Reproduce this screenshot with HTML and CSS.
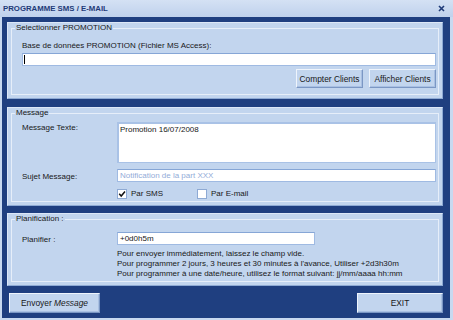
FILE: index.html
```html
<!doctype html>
<html lang="fr">
    <head>
        <meta charset="UTF-8" />
        <title>PROGRAMME SMS / E-MAIL</title>
        <link rel="stylesheet" href="styles.css">
    </head>
    <body>
        <div class="window">
            <div class="titlebar">
                <span class="title">PROGRAMME SMS / E-MAIL</span>
                <svg class="close" width="7" height="7" viewBox="0 0 7 7">
                    <path d="M1 1 L6 6 M6 1 L1 6" stroke="#1f3b78" stroke-width="1.6" />
                </svg>
            </div>

            <div class="frame">
                <section class="panel panel-promo">
                    <fieldset class="group">
                        <legend>Selectionner PROMOTION</legend>
                        <div class="group-body">
                            <div class="field-label">Base de données PROMOTION (Fichier MS Access):</div>
                            <div class="text-input db-input"><span class="caret"></span></div>
                            <div class="btn-row">
                                <button class="btn btn-clients">Compter Clients</button>
                                <button class="btn btn-clients">Afficher Clients</button>
                            </div>
                        </div>
                    </fieldset>
                </section>

                <section class="panel panel-message">
                    <fieldset class="group">
                        <legend>Message</legend>
                        <div class="group-body form-grid">
                            <div class="row-label">Message Texte:</div>
                            <div class="text-area">Promotion 16/07/2008</div>

                            <div class="row-label subject-label">Sujet Message:</div>
                            <div class="text-input subject-input placeholder">Notification de la part XXX</div>

                            <div></div>
                            <div class="checks">
                                <span class="check-item">
                                    <span class="check-box">
                                        <svg width="8" height="8" viewBox="0 0 8 8">
                                            <path d="M1.2 3.8 L3.2 6 L7 1.6" fill="none" stroke="#111" stroke-width="1.5" />
                                        </svg>
                                    </span>
                                    Par SMS
                                </span>
                                <span class="check-item">
                                    <span class="check-box"></span>
                                    Par E-mail
                                </span>
                            </div>
                        </div>
                    </fieldset>
                </section>

                <section class="panel panel-plan">
                    <fieldset class="group">
                        <legend>Planification :</legend>
                        <div class="group-body form-grid">
                            <div class="row-label plan-label">Planifier :</div>
                            <div class="text-input plan-input">+0d0h5m</div>

                            <div></div>
                            <div class="help">
                                <p>Pour envoyer immédiatement, laissez le champ vide.</p>
                                <p>Pour programmer 2 jours, 3 heures et 30 minutes à l'avance, Utiliser +2d3h30m</p>
                                <p>Pour programmer à une date/heure, utilisez le format suivant: jj/mm/aaaa hh:mm</p>
                            </div>
                        </div>
                    </fieldset>
                </section>

                <div class="actions">
                    <button class="btn btn-send">Envoyer <i>Message</i></button>
                    <button class="btn btn-exit">EXIT</button>
                </div>
            </div>
        </div>
    </body>
</html>
```

FILE: styles.css
```css
* {
    margin: 0;
    padding: 0;
    box-sizing: border-box;
}

body {
    font-family: "Liberation Sans", Arial, sans-serif;
    font-size: 8px;
    line-height: 10px;
    color: #181818;
    background: #c8d9f0;
}

.window {
    width: 453px;
    height: 320px;
    display: flex;
    flex-direction: column;
}

.titlebar {
    height: 17px;
    display: flex;
    align-items: center;
    justify-content: space-between;
    padding: 0 8px 0 3px;
    background: linear-gradient(#d4e1f4, #bfd1ec);
}

.title {
    font-weight: bold;
    font-size: 7.8px;
    color: #1f3b78;
}

.frame {
    flex: 1;
    background: #1f3f80;
    border: solid #c8d9f0;
    border-width: 0 3px 2px 2px;
    padding: 5px 7px 0 5px;
    display: flex;
    flex-direction: column;
}

.panel {
    background: #c2d5ee;
    border: 1px solid;
    border-color: #dce7f7 #8eaad4 #8eaad4 #dce7f7;
    padding: 0 3px 3px;
}

.panel-promo {
    height: 77px;
}

.panel-message {
    height: 99px;
    margin-top: 8px;
}

.panel-plan {
    height: 73px;
    margin-top: 7px;
}

.group {
    height: 100%;
    border: 1px solid #e6eef9;
}

.group legend {
    margin-left: 3px;
    padding: 0 1px;
    font-size: 8px;
    line-height: 10px;
}

.group-body {
    padding: 0 2px 0 10px;
}

.field-label {
    margin-top: 8px;
}

.text-input {
    height: 13px;
    background: white;
    border: 1px solid #9fbae2;
    border-top-color: #86a6d6;
    padding: 0 2px;
    line-height: 11px;
}

.db-input {
    margin-top: 2px;
    position: relative;
}

.caret {
    position: absolute;
    left: 1px;
    top: 1px;
    width: 1px;
    height: 9px;
    background: #000;
}

.btn-row {
    display: flex;
    justify-content: flex-end;
    gap: 6px;
    margin-top: 3px;
}

.btn {
    font-family: inherit;
    font-size: 8.4px;
    color: #181818;
    height: 19px;
    background: #c2d5ee;
    border: 1px solid;
    border-color: #eef4fc #7b97c4 #7b97c4 #eef4fc;
    box-shadow: inset -1px -1px 0 #a9c0e2;
}

.btn-clients {
    width: 67px;
}

.form-grid {
    display: grid;
    grid-template-columns: 95px 1fr;
    align-items: start;
}

.panel-message .form-grid {
    margin-top: 4px;
}

.row-label {
    padding-top: 1px;
}

.text-area {
    height: 41px;
    background: white;
    border: 2px solid #a9c2e6;
    border-right-width: 1px;
    border-bottom-width: 1px;
    padding: 0 1px;
    line-height: 11px;
}

.subject-label {
    margin-top: 8px;
}

.subject-input {
    margin-top: 6px;
}

.placeholder {
    color: #93acd8;
}

.checks {
    display: flex;
    margin-top: 7px;
    height: 10px;
}

.check-item {
    display: flex;
    align-items: center;
    gap: 4px;
    width: 80px;
}

.check-box {
    width: 10px;
    height: 10px;
    background: white;
    border: 1px solid #8eaad4;
    display: flex;
    align-items: center;
    justify-content: center;
}

.panel-plan .form-grid {
    margin-top: 8px;
}

.plan-label {
    margin-top: 2px;
}

.plan-input {
    width: 198px;
}

.help {
    margin-top: 4px;
    line-height: 10px;
}

.actions {
    display: flex;
    justify-content: space-between;
    margin-top: 7px;
    padding-left: 2px;
}

.btn-send {
    width: 91px;
    height: 20px;
}

.btn-exit {
    width: 86px;
    height: 20px;
}
```
